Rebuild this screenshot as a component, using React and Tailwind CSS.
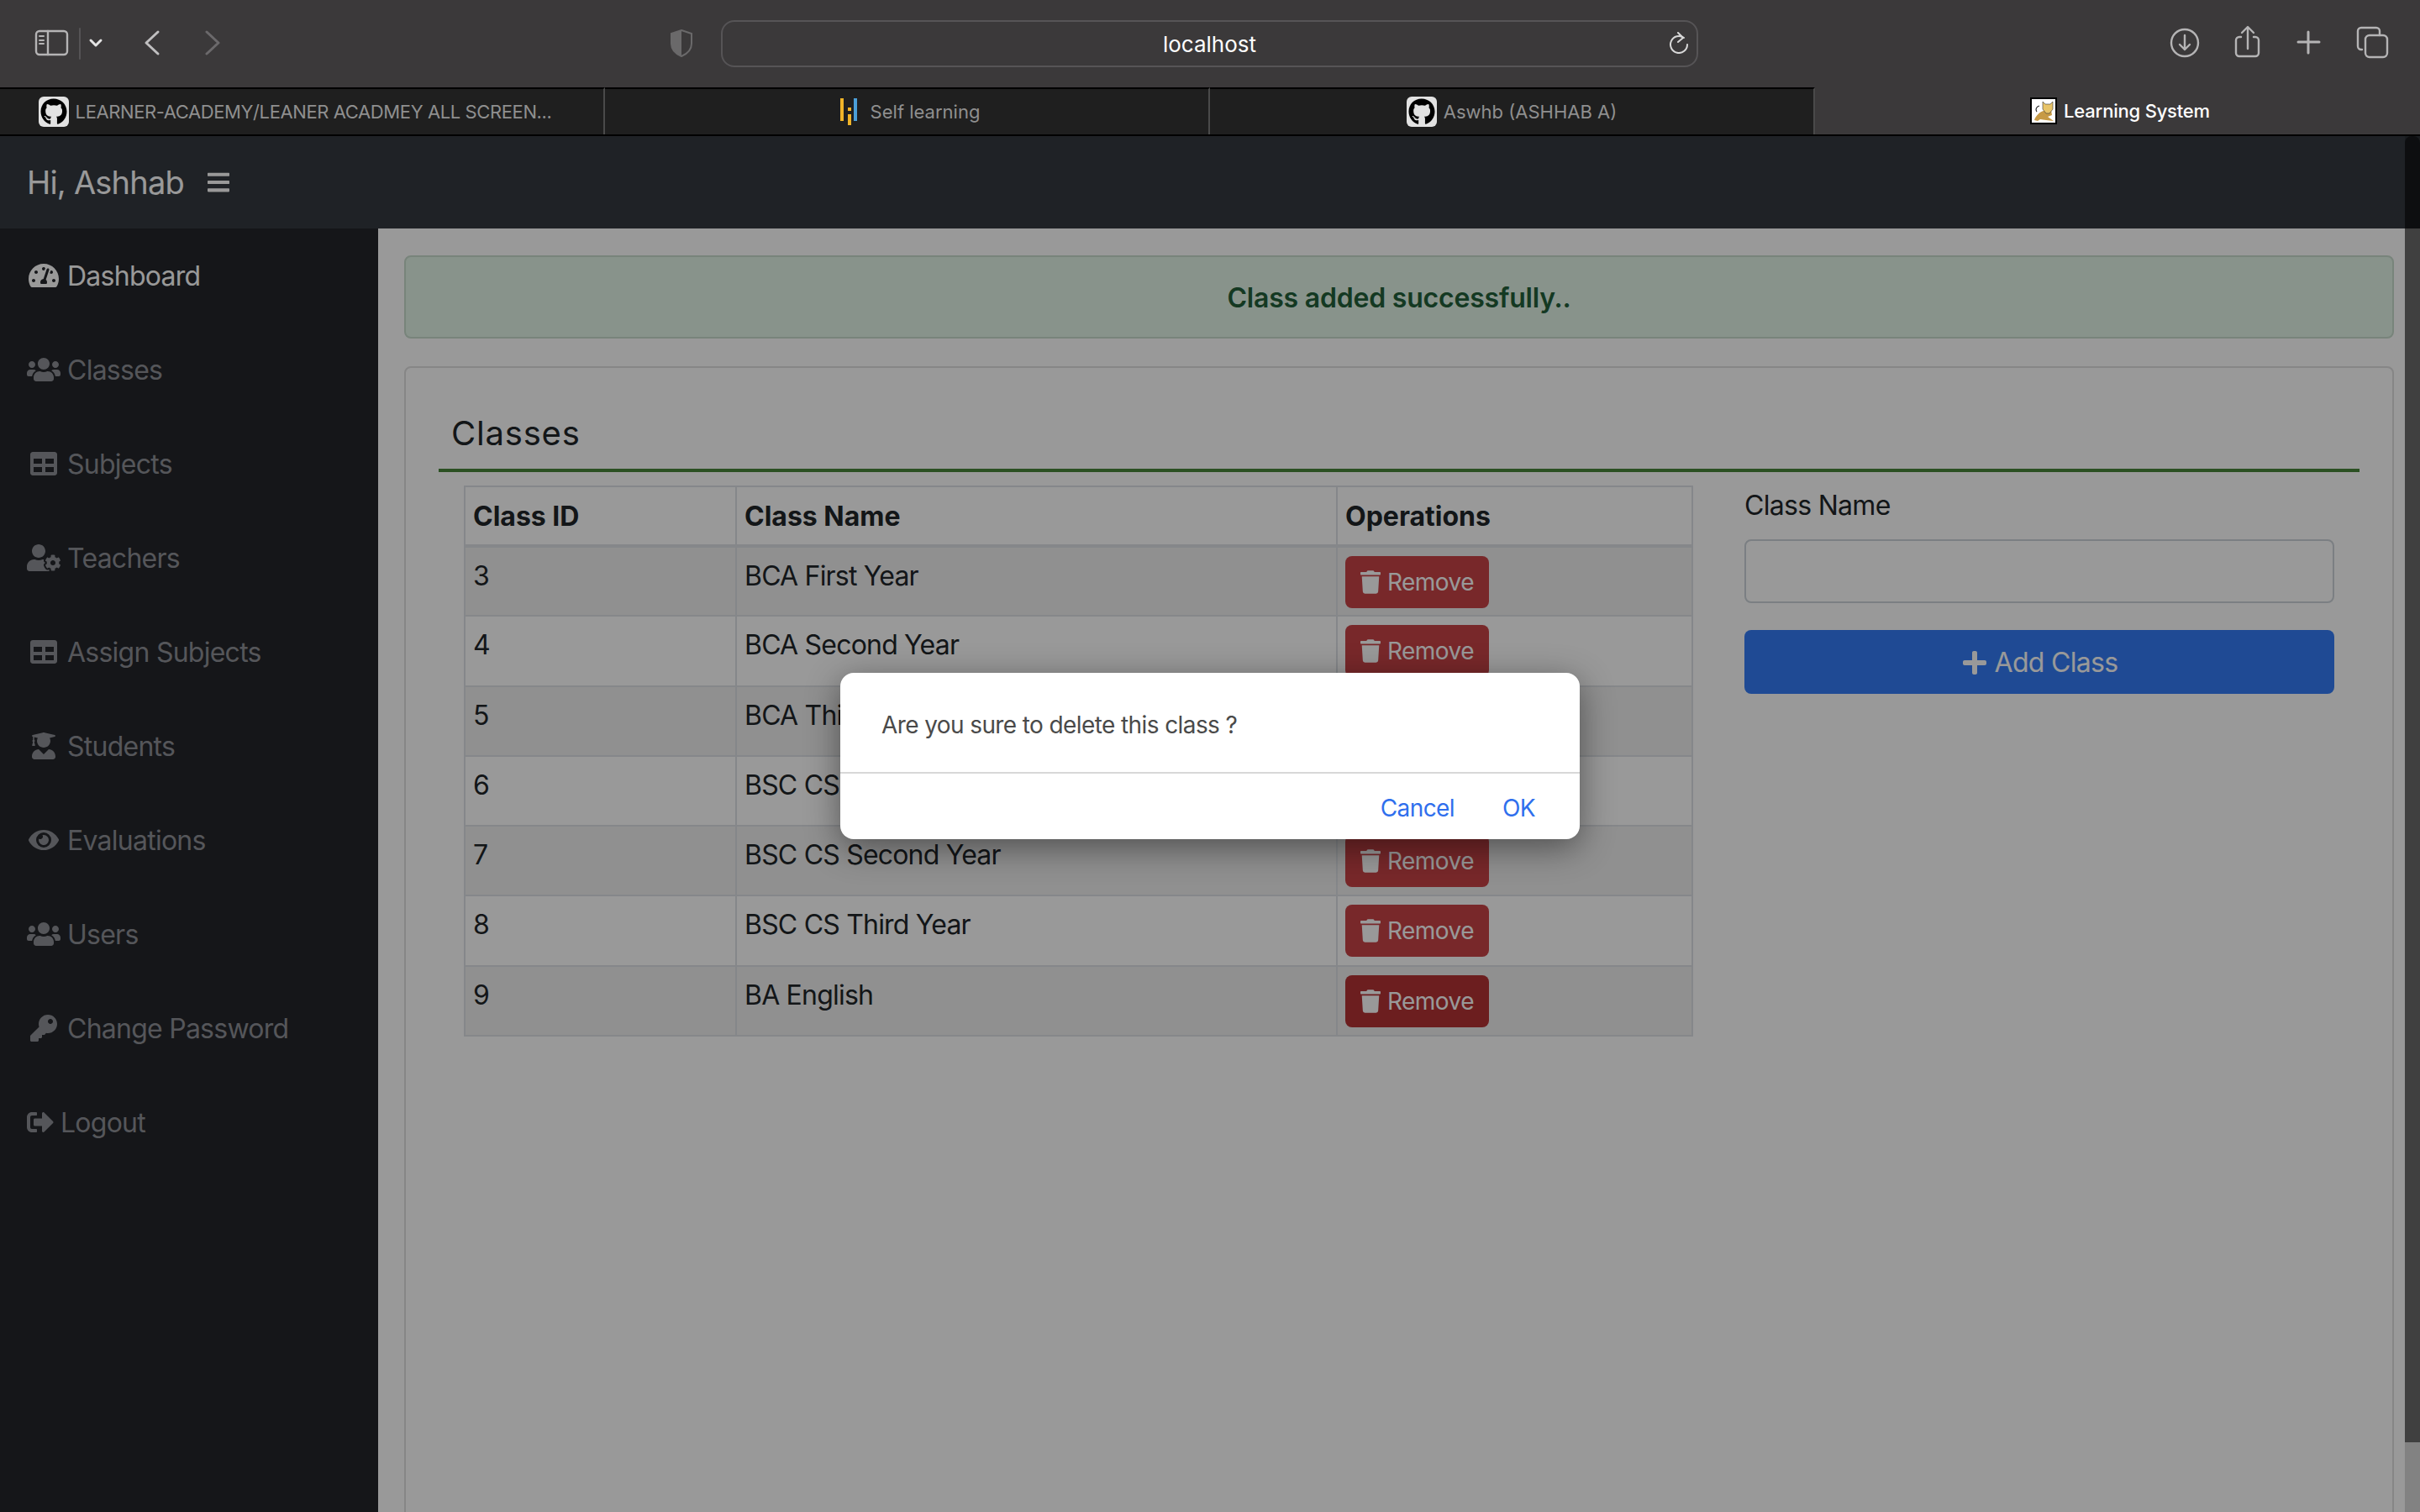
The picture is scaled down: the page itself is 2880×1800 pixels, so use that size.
import {
  FaBars,
  FaEye,
  FaGithub,
  FaKey,
  FaPlus,
  FaSignOutAlt,
  FaTable,
  FaTachometerAlt,
  FaTrash,
  FaUserCog,
  FaUserGraduate,
  FaUsers,
} from "react-icons/fa";

const navItems = [
  { label: "Dashboard", icon: FaTachometerAlt, size: 36, active: true },
  { label: "Classes", icon: FaUsers, size: 40 },
  { label: "Subjects", icon: FaTable, size: 32 },
  { label: "Teachers", icon: FaUserCog, size: 40 },
  { label: "Assign Subjects", icon: FaTable, size: 32 },
  { label: "Students", icon: FaUserGraduate, size: 32 },
  { label: "Evaluations", icon: FaEye, size: 36 },
  { label: "Users", icon: FaUsers, size: 40 },
  { label: "Change Password", icon: FaKey, size: 32 },
];

const classes = [
  { id: 3, name: "BCA First Year" },
  { id: 4, name: "BCA Second Year" },
  { id: 5, name: "BCA Third Year" },
  { id: 6, name: "BSC CS First Year" },
  { id: 7, name: "BSC CS Second Year" },
  { id: 8, name: "BSC CS Third Year" },
  { id: 9, name: "BA English", hover: true },
];

function ToolbarLeft() {
  return (
    <svg width="280" height="104" viewBox="0 0 280 104" fill="none" strokeLinecap="round" strokeLinejoin="round" className="shrink-0">
      <rect x="43" y="37" width="37" height="28" rx="4" stroke="#b5b4b5" strokeWidth="2.4" />
      <path d="M57 37v28" stroke="#b5b4b5" strokeWidth="2.4" />
      <path d="M47 43h5M47 48h5M47 52h5" stroke="#b5b4b5" strokeWidth="2" />
      <path d="M95 34v36" stroke="#555355" strokeWidth="2" />
      <path d="M108 48l6 6 6-6" stroke="#e4e4e4" strokeWidth="3" />
      <path d="M188 38l-14 13 14 13" stroke="#c0bfc0" strokeWidth="3" />
      <path d="M246 38l14 13-14 13" stroke="#6b696b" strokeWidth="3" />
    </svg>
  );
}

function ToolbarRight() {
  return (
    <svg width="320" height="104" viewBox="2560 0 320 104" fill="none" strokeLinecap="round" strokeLinejoin="round" className="shrink-0" stroke="#b5b4b5" strokeWidth="2.4">
      <circle cx="2600" cy="51" r="16" />
      <path d="M2600 42v17M2594 53l6 6 6-6" />
      <path d="M2667 44h-2a4 4 0 0 0-4 4v15a4 4 0 0 0 4 4h19a4 4 0 0 0 4-4v-15a4 4 0 0 0-4-4h-2" />
      <path d="M2675 33v25M2668 39l7-7 7 7" />
      <path d="M2747 38v25M2735 50h25" strokeWidth="3" />
      <path d="M2811 59h-1a4 4 0 0 1-4-4V37a4 4 0 0 1 4-4h18a4 4 0 0 1 4 4v5" />
      <rect x="2815" y="42" width="26" height="26" rx="5" />
    </svg>
  );
}

function GithubFavicon() {
  return (
    <span className="flex h-9 w-9 items-center justify-center rounded-md bg-[#e2e2e2]">
      <FaGithub className="h-8 w-8 text-black" />
    </span>
  );
}

function BarsFavicon() {
  return (
    <svg width="36" height="32" viewBox="-8 0 36 32">
      <rect x="0" y="0" width="4" height="27" fill="#f0b429" />
      <rect x="9" y="11" width="4" height="4" fill="#f0b429" />
      <rect x="9" y="19" width="4" height="13" fill="#f0b429" />
      <rect x="16" y="0" width="4" height="27" fill="#4b9fd8" />
    </svg>
  );
}

function CatFavicon() {
  return (
    <svg width="32" height="32" viewBox="0 0 32 32">
      <rect x="1" y="1" width="30" height="30" fill="#fff" stroke="#000" strokeWidth="2" />
      <path d="M5 27c2-6 7-10 11-11l3-2 6 1 1 6-5 2 7 5-9-1-7-1-3 2z" fill="#c79a45" />
      <path d="M15 5l3 3h6l3-3v9l-4 5h-4l-4-5z" fill="#e8c468" stroke="#333" strokeWidth="0.6" />
      <path d="M8 17c-2-2-1-6 3-7" fill="none" stroke="#222" strokeWidth="1.2" />
    </svg>
  );
}

function Tab({ icon, label, active, last, className }) {
  return (
    <div
      className={`flex h-full w-[720px] items-center justify-center gap-2 ${active ? "bg-[#3b393a] text-white font-medium" : "border-t-2 border-black text-[#8f8f8f]"} ${last ? "" : "border-r-2 border-r-[#4a4a4a]"} ${className || ""}`}
    >
      {icon}
      <span className="text-[22px] leading-none">{label}</span>
    </div>
  );
}

function BrowserChrome() {
  return (
    <div className="shrink-0">
      <div className="flex h-[104px] items-start justify-between bg-[#3b393a]">
        <ToolbarLeft />
        <div className="relative ml-[517px] mr-auto flex items-center gap-[33px] pt-[24px]">
          <svg width="28" height="33" viewBox="0 0 28 33" fill="none" className="mt-[-2px]">
            <path d="M14 1l12 4v12c0 7-5 12-12 15C7 29 2 24 2 17V5z" stroke="#6a696a" strokeWidth="2" />
            <path d="M14 1L2 5v12c0 7 5 12 12 15z" fill="#6a696a" />
          </svg>
          <div className="flex h-[56px] w-[1163px] items-center justify-center rounded-2xl border-2 border-[#565456] pt-[1px] text-[26px] text-white">
            localhost
          </div>
          <svg width="24" height="26" viewBox="0 0 24 26" fill="none" stroke="#d8d8d8" strokeWidth="2" strokeLinecap="round" strokeLinejoin="round" className="absolute right-[11px] top-[38px]">
            <path d="M18 7a10 10 0 1 0 4 8" />
            <path d="M11 1l6 6-6 5" />
          </svg>
        </div>
        <ToolbarRight />
      </div>
      <div className="flex h-[58px] border-b-2 border-black bg-[#1f1f1f]">
        <Tab
          icon={<GithubFavicon />}
          label="LEARNER-ACADEMY/LEANER ACADMEY ALL SCREEN..."
          className="pr-[16px] tracking-[-0.4px]"
        />
        <Tab icon={<BarsFavicon />} label="Self learning" />
        <Tab icon={<GithubFavicon />} label="Aswhb (ASHHAB A)" />
        <Tab icon={<CatFavicon />} label="Learning System" active last className="pl-[6px] tracking-[-0.2px]" />
      </div>
    </div>
  );
}

function Sidebar() {
  return (
    <aside className="w-[450px] shrink-0 bg-[#23252a] text-[32px] tracking-[-0.75px]">
      {navItems.map((item) => {
        const Icon = item.icon;
        return (
          <div
            key={item.label}
            className={`flex h-[112px] items-center gap-2 pl-[32px] ${item.active ? "text-white" : "text-[#8e9096]"}`}
          >
            <span className="flex w-10 justify-center">
              <Icon style={{ width: item.size, height: 32 }} />
            </span>
            <span className="pt-[2px]">{item.label}</span>
          </div>
        );
      })}
      <div className="flex h-[112px] items-center gap-2 pl-[32px] text-[#8e9096]">
        <FaSignOutAlt className="h-8 w-8" />
        <span className="pt-[2px]">Logout</span>
      </div>
    </aside>
  );
}

function RemoveButton({ hover }) {
  return (
    <button className={`flex h-[62px] w-[171px] items-center justify-center gap-2 rounded-lg text-[28px] tracking-[-0.5px] text-white ${hover ? "bg-[#b43335]" : "bg-[#c84447]"}`}>
      <FaTrash className="h-7 w-6" />
      Remove
    </button>
  );
}

function ClassesTable() {
  return (
    <table className="w-[1463px] table-fixed border-collapse text-left text-[32px] leading-[48px] text-[#212529]">
      <thead>
        <tr className="h-[71px] border-b-4 border-[#dee2e6]">
          <th className="w-[323px] border-2 border-b-4 border-[#dee2e6] px-[9px] pt-[2px] font-bold">Class ID</th>
          <th className="w-[715px] border-2 border-b-4 border-[#dee2e6] px-[9px] pt-[2px] font-bold">Class Name</th>
          <th className="border-2 border-b-4 border-[#dee2e6] px-[9px] pt-[2px] font-bold">Operations</th>
        </tr>
      </thead>
      <tbody className="tracking-[-0.8px]">
        {classes.map((row, i) => (
          <tr key={row.id} className={i % 2 === 0 ? "bg-[#f0f0f0]" : ""}>
            <td className="h-[83.3px] border-2 border-[#dee2e6] px-[9px] pt-[10px] pb-0 align-top">{row.id}</td>
            <td className="border-2 border-[#dee2e6] px-[9px] pt-[10px] pb-0 align-top">{row.name}</td>
            <td className="border-2 border-[#dee2e6] px-[9px] pt-[10px] pb-0 align-top">
              <RemoveButton hover={row.hover} />
            </td>
          </tr>
        ))}
      </tbody>
    </table>
  );
}

function AddClassForm() {
  return (
    <form className="w-[702px] text-[32px] tracking-[-0.7px] text-[#212529]">
      <label className="mb-4 block leading-[48px]">Class Name</label>
      <input type="text" className="block h-[76px] w-full rounded-lg border-2 border-[#ced4da] bg-white" />
      <button type="button" className="mt-8 flex h-[76px] w-full items-center justify-center gap-[8px] rounded-lg bg-[#347cf7] pt-[2px] text-white">
        <FaPlus className="h-8 w-8" />
        Add Class
      </button>
    </form>
  );
}

function MainContent() {
  return (
    <main className="flex-1 overflow-hidden bg-white px-[31px] pt-[32px]">
      <div className="flex h-[99px] items-center justify-center rounded-lg border-2 border-[#c8dccd] bg-[#e3f5e8] pt-[2px] text-[32px] font-semibold tracking-[-0.2px] text-[#22603a]">
        Class added successfully..
      </div>
      <section className="mt-[33px] h-[1400px] rounded-lg border-2 border-[#dfdfdf] px-[39px] pt-[30px]">
        <h2 className="h-[94px] border-b-4 border-[#48853a] pl-[15px] pt-5 text-[40px] leading-[56px] tracking-[0.8px] text-[#212529]">
          Classes
        </h2>
        <div className="mt-[16px] flex gap-[61px] pl-[30px]">
          <ClassesTable />
          <AddClassForm />
        </div>
      </section>
    </main>
  );
}

function ConfirmDialog() {
  return (
    <div className="absolute left-[1000px] top-[801px] w-[880px] rounded-2xl bg-white text-[28px] tracking-[-0.6px] shadow-[0_10px_40px_rgba(0,0,0,0.45)]">
      <div className="flex h-[120px] items-center border-b-2 border-[#d8d8d8] pl-[49px] pt-[5px] text-[#4a4a4a]">
        Are you sure to delete this class ?
      </div>
      <div className="flex h-[78px] items-center justify-end gap-[57px] pr-[53px] pt-[3px] text-[#2f6fed]">
        <span>Cancel</span>
        <span>OK</span>
      </div>
    </div>
  );
}

export default function App() {
  return (
    <div className="relative flex h-[1800px] w-[2880px] flex-col overflow-hidden bg-white font-['Inter',sans-serif]">
      <BrowserChrome />
      <div className="flex h-[110px] shrink-0 items-center gap-[28px] bg-[#343a40] pl-[32px] text-[38px] tracking-[-0.8px] text-white">
        Hi, Ashhab
        <FaBars className="h-[30px] w-[26px]" />
      </div>
      <div className="flex min-h-0 flex-1">
        <Sidebar />
        <MainContent />
      </div>
      {/* scrollbar sits under the dim layer so it darkens with the page */}
      <div className="absolute bottom-0 right-0 top-[162px] w-[18px] bg-black/15">
        <div className="h-[1555px] rounded-t-lg bg-black/50" />
      </div>
      <div className="absolute inset-x-0 bottom-0 top-[162px] bg-black/40" />
      <ConfirmDialog />
    </div>
  );
}
